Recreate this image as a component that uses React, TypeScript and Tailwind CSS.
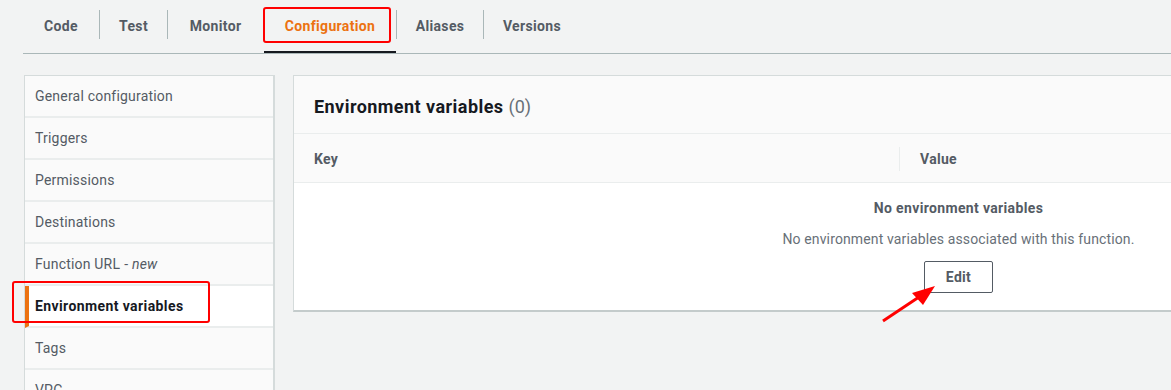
const tabs = [
  { label: "Code", width: "w-[76px]" },
  { label: "Test", width: "w-[67px]" },
  { label: "Monitor", width: "w-[95px]" },
  { label: "Configuration", width: "w-[132px]", active: true },
  { label: "Aliases", width: "w-[86px]" },
  { label: "Versions", width: "w-[96px]" },
];

const menu = [
  "General configuration",
  "Triggers",
  "Permissions",
  "Destinations",
  "Function URL",
  "Environment variables",
  "Tags",
  "VPC",
];

function Tabs() {
  return (
    <div className="ml-[23px] flex border-b border-[#aab7b8]">
      {tabs.map((tab, i) => (
        <div key={tab.label} className="flex">
          {i > 0 ? <div className="mt-[10px] h-[29px] w-px bg-[#aab7b8]" /> : null}
          <div
            className={[
              "flex h-[53px] items-start justify-center pt-[16px] text-[14px] font-bold tracking-[0.35px]",
              tab.width,
              tab.active
                ? "border-b-2 border-[#16191f] text-[#ec7211]"
                : "text-[#545b64]",
            ].join(" ")}
          >
            {tab.label}
          </div>
        </div>
      ))}
    </div>
  );
}

function Sidebar() {
  return (
    <nav className="w-[251px] shrink-0 self-start border-l border-r-2 border-t border-[#d5dbdb]">
      {menu.map((item) => {
        const active = item === "Environment variables";
        return (
          <div
            key={item}
            className={[
              "flex h-[42px] items-center border-b-2 border-[#eaeded] text-[14px]",
              active
                ? "border-l-4 border-l-[#ec7211] bg-white pt-[1px] pl-[6px] font-bold tracking-[0.4px] text-[#16191f]"
                : "bg-[#fafafa] pl-[10px] tracking-[0.2px] text-[#545b64]",
            ].join(" ")}
          >
            {item}
            {item === "Function URL" ? (
              <span className="ml-[4px]">
                - <i>new</i>
              </span>
            ) : null}
          </div>
        );
      })}
    </nav>
  );
}

function EnvPanel() {
  return (
    <section className="w-[1330px] shrink-0 self-start border-l border-t border-b-2 border-[#d5dbdb] border-b-[#c4cbcb] bg-white">
      <header className="flex h-[58px] items-center border-b border-[#eaeded] bg-[#fafafa] pt-[3px] pl-[20px]">
        <h2 className="text-[18px] font-bold tracking-[0.45px] text-[#16191f]">
          Environment variables{" "}
          <span className="font-normal tracking-normal text-[#687078]">(0)</span>
        </h2>
      </header>
      <div className="flex h-[49px] items-center border-b border-[#eaeded] bg-[#fafafa] pt-[2px] text-[14px] font-bold tracking-[0.3px] text-[#545b64]">
        <div className="w-[605px] pl-[20px]">Key</div>
        <div className="h-[24px] w-px bg-[#eaeded]" />
        <div className="pl-[20px]">Value</div>
      </div>
      <div className="flex flex-col items-center pt-[15px] pb-[17px] text-[14px]">
        <p className="leading-[20px] font-bold tracking-[0.35px] text-[#545b64]">
          No environment variables
        </p>
        <p className="mt-[11px] leading-[20px] tracking-[0.13px] text-[#687078]">
          No environment variables associated with this function.
        </p>
        <button className="mt-[12px] h-[32px] w-[69px] rounded-[2px] border border-[#545b64] bg-white text-[14px] font-bold tracking-[0.3px] text-[#545b64]">
          Edit
        </button>
      </div>
    </section>
  );
}

export default function App() {
  return (
    <div
      className="relative h-[390px] w-full overflow-hidden bg-[#f2f3f3]"
      style={{ fontFamily: "Roboto, 'Noto Sans', sans-serif" }}
    >
      <Tabs />
      <div className="mt-[21px] flex gap-[18px] pl-[24px]">
        <Sidebar />
        <EnvPanel />
      </div>

      {/* annotations */}
      <div className="absolute left-[263px] top-[7px] h-[36px] w-[128px] rounded-[3px] border-2 border-[#ff0000]" />
      <div className="absolute left-[12px] top-[281px] h-[42px] w-[198px] rounded-[3px] border-2 border-[#ff0000]" />
      <svg
        className="absolute left-[878px] top-[282px]"
        width="62"
        height="44"
        viewBox="0 0 62 44"
      >
        <line x1="5" y1="39" x2="44" y2="13" stroke="#ff0000" strokeWidth="3" />
        <polygon points="57,4 34,11 45,23" fill="#ff0000" />
      </svg>
    </div>
  );
}
